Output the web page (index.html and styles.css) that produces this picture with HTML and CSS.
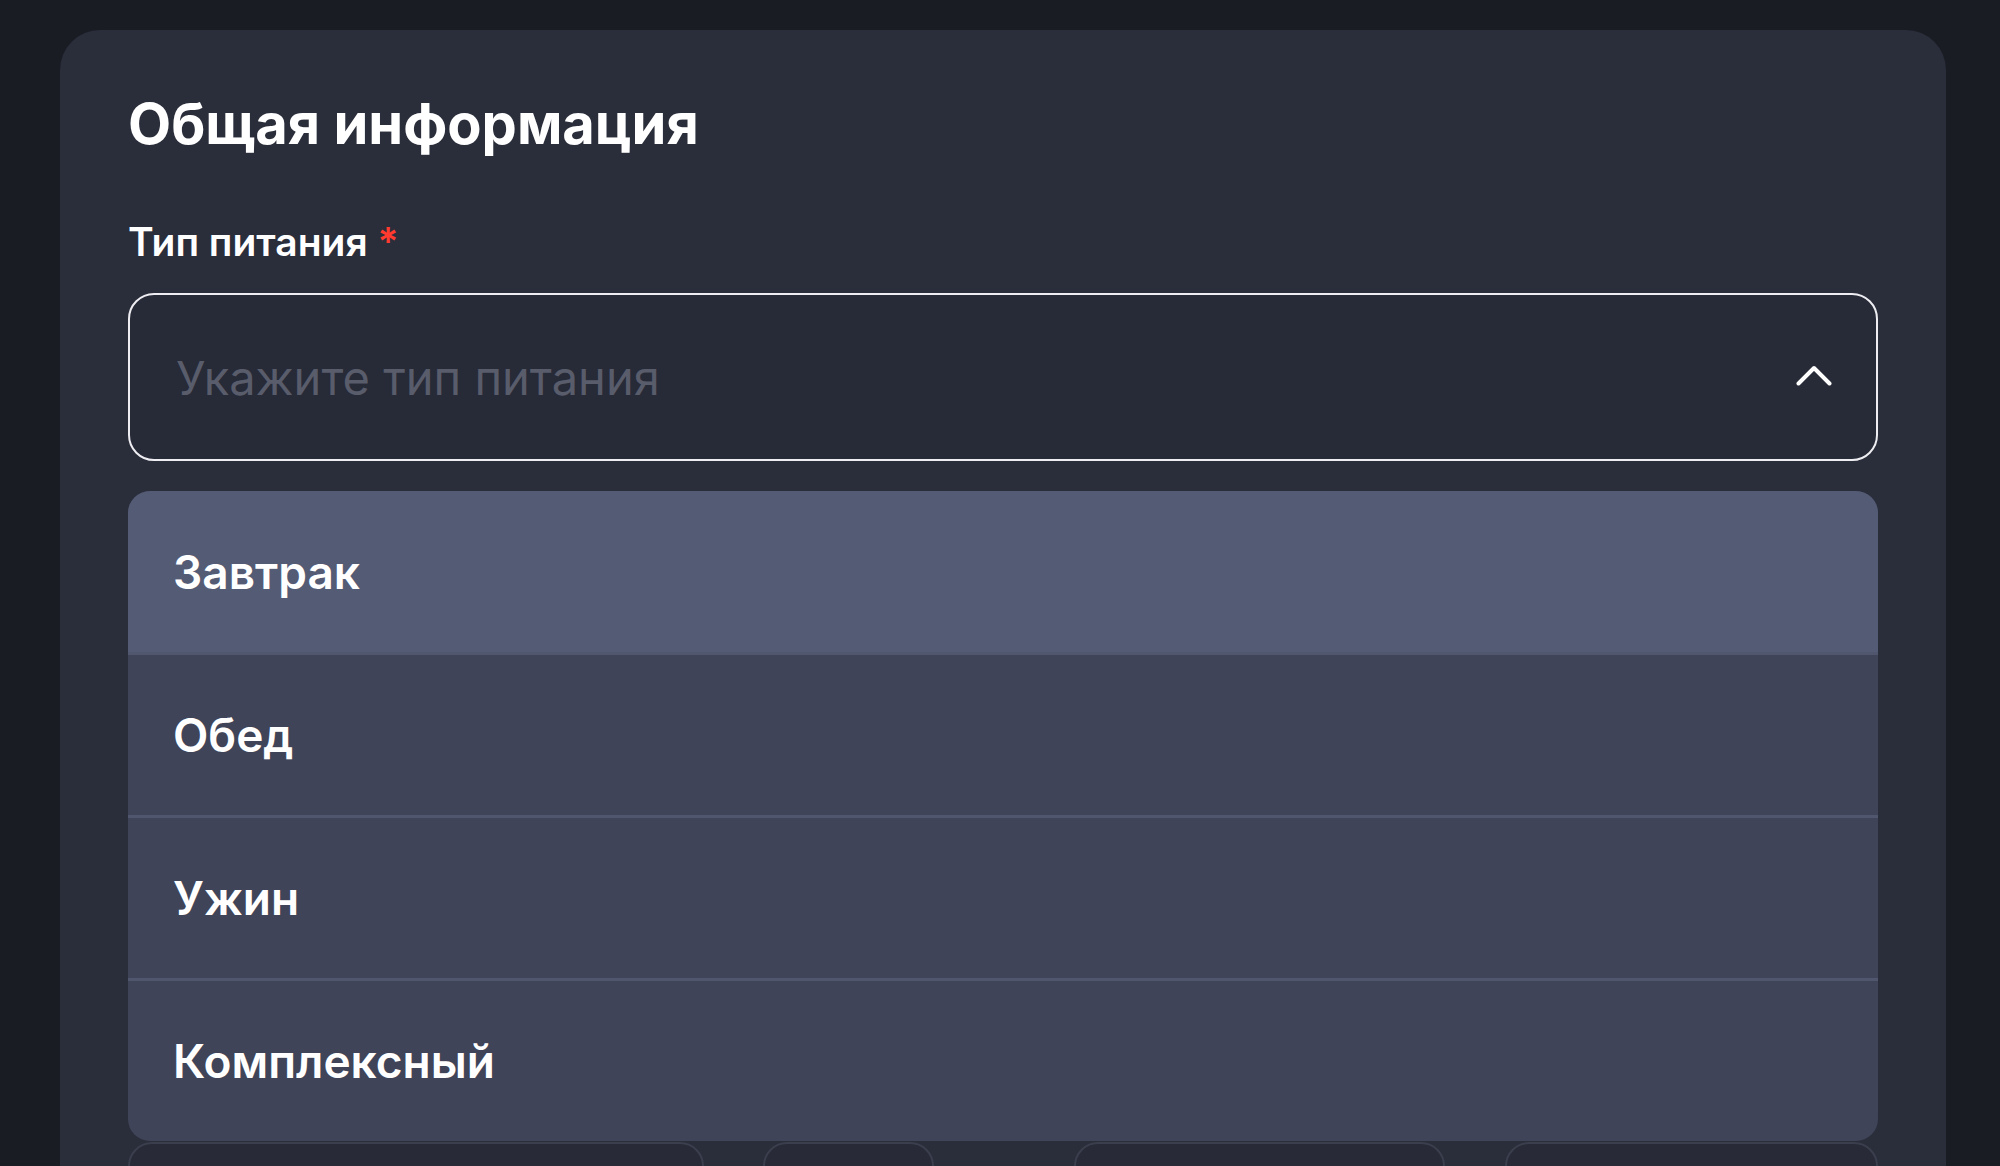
FILE: index.html
```html
<!DOCTYPE html>
<html lang="ru">
<head>
<meta charset="utf-8">
<title>Общая информация</title>
<link rel="stylesheet" href="styles.css">
</head>
<body>
<div class="page">
  <section class="card">
    <h1 class="title">Общая информация</h1>
    <div class="field">
      <label class="label">Тип питания <span class="req">*</span></label>
      <div class="select-wrap">
        <div class="select">
          <span class="placeholder">Укажите тип питания</span>
          <svg class="chevron" width="36" height="21" viewBox="0 0 36 21" aria-hidden="true">
            <path d="M2.5 18.5 L18 3 L33.5 18.5" fill="none" stroke="#ffffff" stroke-width="4" stroke-linecap="round" stroke-linejoin="round"/>
          </svg>
        </div>
        <ul class="menu">
          <li class="option active">Завтрак</li>
          <li class="option">Обед</li>
          <li class="option">Ужин</li>
          <li class="option last">Комплексный</li>
        </ul>
      </div>
    </div>
    <div class="row">
      <div class="box box-a"></div>
      <div class="box box-b"></div>
      <div class="box box-c"></div>
      <div class="box box-d"></div>
    </div>
  </section>
</div>
</body>
</html>
```

FILE: styles.css
```css
* { box-sizing: border-box; }

html, body {
  margin: 0;
  padding: 0;
  height: 100%;
  overflow: hidden;
  background: #1a1c24;
  font-family: Inter, "Noto Sans", "Liberation Sans", sans-serif;
  color: #ffffff;
}

.page {
  padding: 30px 54px 0 60px;
}

.card {
  background: #2a2d3a;
  border-radius: 40px;
  padding: 60px 68px 0 68px;
  min-height: 1300px;
}

.title {
  margin: 0;
  font-size: 56px;
  font-weight: 700;
  line-height: normal;
  letter-spacing: 0;
}

.field {
  margin-top: 60px;
}

.label {
  display: block;
  font-size: 39px;
  font-weight: 600;
  line-height: normal;
}

.req {
  color: #ff3b30;
}

.select-wrap {
  position: relative;
  margin-top: 28px;
}

.select {
  height: 168px;
  border: 2.5px solid #eeeef2;
  border-radius: 26px;
  background: #272a37;
  display: flex;
  align-items: center;
  justify-content: space-between;
  padding: 0 44px 0 46px;
}

.placeholder {
  font-size: 47px;
  font-weight: 400;
  color: #585c6b;
}

.chevron {
  display: block;
  margin-top: -4px;
}

.menu {
  position: absolute;
  z-index: 2;
  left: 0;
  right: 0;
  top: 198px;
  margin: 0;
  padding: 0;
  list-style: none;
  background: #3f4458;
  border-radius: 22px;
  overflow: hidden;
}

.option {
  height: 163px;
  display: flex;
  align-items: center;
  padding-left: 45px;
  font-size: 46px;
  font-weight: 600;
  color: #ffffff;
  border-top: 3px solid #50566e;
}

.option.active {
  height: 161px;
  border-top: 0;
  background: #545b75;
}

.option.last {
  height: 163px;
}

.row {
  display: flex;
  margin-top: 681px;
}

.box {
  height: 140px;
  border: 2px solid #3a3e4d;
  border-radius: 24px;
  background: #282b37;
}

.box-a { width: 576px; }
.box-b { width: 171px; margin-left: 59px; }
.box-c { width: 371px; margin-left: 140px; }
.box-d { width: 373px; margin-left: 60px; }
```
